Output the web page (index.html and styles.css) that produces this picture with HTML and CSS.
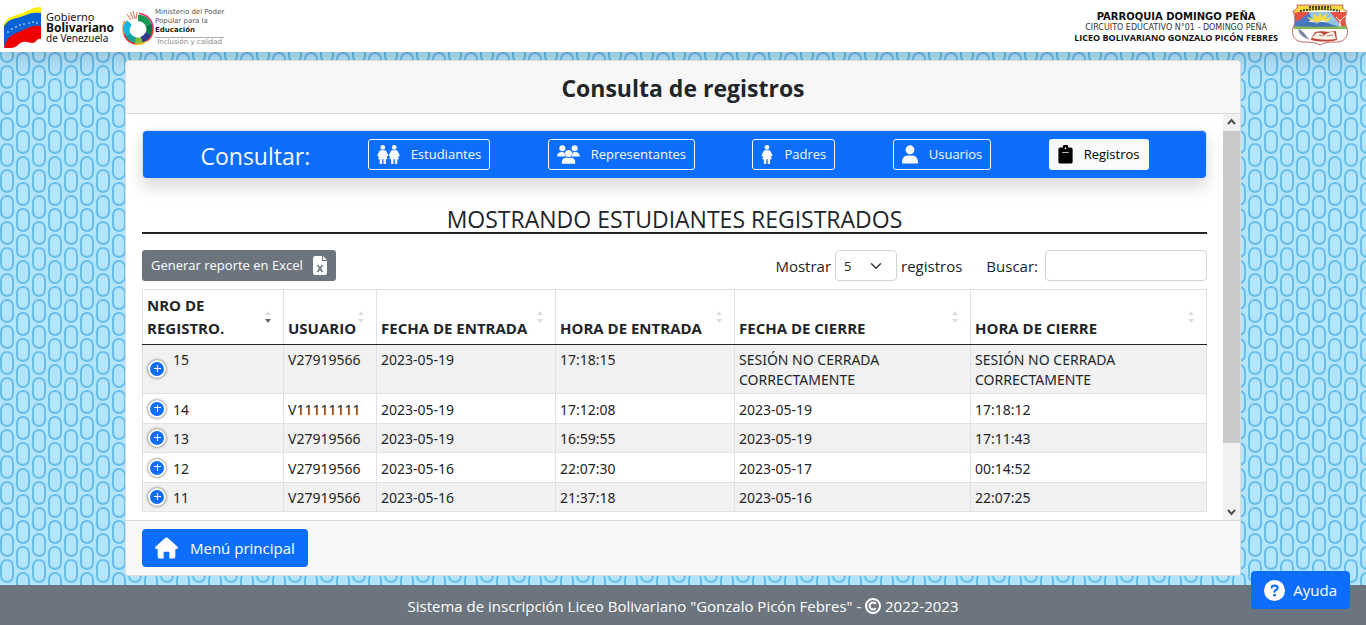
FILE: index.html
```html
<!DOCTYPE html>
<html lang="es">
<head>
<meta charset="utf-8">
<meta name="viewport" content="width=device-width, initial-scale=1">
<title>Consulta de registros</title>
<link rel="stylesheet" href="styles.css">
</head>
<body>
<svg class="defs" aria-hidden="true">
  <symbol id="kid" viewBox="0 0 12 20"><circle cx="6" cy="2.600" r="2.500"/><path d="M4.300 5.600h3.400c1 0 1.700.6 2.100 1.300l2 3.900c.4.900-.9 1.700-1.500.9l-.3-.4.9 3.700H9.300v4.300c0 1.100-2.600 1.100-2.600 0V15H5.300v4.300c0 1.100-2.600 1.100-2.600 0V15H1.100l.9-3.700-.3.400c-.6.8-1.900 0-1.500-.9l2-3.900c.4-.7 1.100-1.300 2.100-1.300z"/></symbol>
  <symbol id="sort" viewBox="0 0 6 14"><path class="up" d="M0 5 3 1l3 4z"/><path class="down" d="M0 9h6l-3 4z"/></symbol>
</svg>

<header class="topbar">
  <div class="brand">
    <svg class="flag" viewBox="0 0 38 42" aria-hidden="true">
      <path fill="#fff200" d="M0 17C4 9 11 9 18 6 26 3 29 0 37 0v15c-7 0-13 3-19 6-7 3-13 2-18 8z"/>
      <path fill="#0b62d6" d="M0 19c5-8 12-7 19-10 7-3 11-4 18-3v14c-6 1-11 4-17 7-7 3-14 3-20 13z"/>
      <path fill="#f00000" d="M0 41c2-11 9-14 17-17 7-3 12-6 20-5v13c-4-1-4 3-8 4-4 0-6-2-10-1-5 1-5 6-13 6z"/>
      <g fill="#fff"><circle cx="4" cy="25" r=".8"/><circle cx="8" cy="22" r=".8"/><circle cx="12" cy="20" r=".8"/><circle cx="16" cy="18" r=".8"/><circle cx="20" cy="17" r=".8"/><circle cx="25" cy="16" r=".8"/><circle cx="29" cy="15" r=".8"/><circle cx="33" cy="16" r=".8"/></g>
    </svg>
    <p class="gov">Gobierno<strong>Bolivariano</strong><span>de Venezuela</span></p>
    <svg class="ring" viewBox="0 0 32 34" aria-hidden="true">
      <g fill="none" stroke-width="6.500">
        <path stroke="#179a51" d="M16 7a11.500 11.500 0 0 1 10.500 6.500"/>
        <path stroke="#087a4a" d="M26.500 13.500a11.500 11.500 0 0 1 0 10"/>
        <path stroke="#303a8c" d="M26.500 23a11.500 11.500 0 0 1-7 6"/>
        <path stroke="#85bc3c" d="M20 29a11.500 11.500 0 0 1-7 .500"/>
        <path stroke="#14a398" d="M13.500 29.500a11.500 11.500 0 0 1-8-6"/>
        <path stroke="#1cb3dd" d="M5.500 24a11.500 11.500 0 0 1 2-12.500"/>
      </g>
      <g fill="none" stroke-width="1.500">
        <path stroke="#e72565" d="M17 2.500A15 15 0 0 1 31 17"/><path stroke="#ef3f28" d="M31 17a15 15 0 0 1-6 13"/>
        <path stroke="#f2b01e" d="M25 30a15 15 0 0 1-12 3"/><path stroke="#e5262a" d="M13 33A15 15 0 0 1 2 23"/><path stroke="#f18d1e" d="M2 23A15 15 0 0 1 3 10"/>
        <path stroke="#e36a50" stroke-width="1" d="m5 3 4 6M8 1l3 7M11 0l2 8M15 1l-1 7"/>
      </g>
    </svg>
    <p class="ministry">Ministerio del Poder<br>Popular para la<br><strong>Educación</strong><span>Inclusión y calidad</span></p>
  </div>
  <div class="school">
    <p><strong class="parish">PARROQUIA DOMINGO PEÑA</strong><span class="circuit">CIRCUITO EDUCATIVO N°01 - DOMINGO PEÑA</span><strong class="liceo">LICEO BOLIVARIANO GONZALO PICÓN FEBRES</strong></p>
    <svg class="crest" viewBox="0 0 56 42" aria-hidden="true">
      <defs><clipPath id="shield"><path d="M5 1h46c-1 3 1 5 4 6-2 7-3 10 0 17 2 6-1 13-9 14-8 0-13 0-18 3-5-3-10-3-18-3-8-1-11-8-9-14 3-7 2-10 0-17 3-1 5-3 4-6z"/></clipPath></defs>
      <g clip-path="url(#shield)">
        <path fill="#fff" d="M0 0h56v42H0z"/>
        <path fill="#91c4e5" d="M8 8h40v17H4z"/>
        <path fill="#4b78c7" d="M0 14 8 8h8l5 8-7 8H0z"/><path fill="#e65341" d="M2 8h16L5 18zM38 8h18v16h-5z"/>
        <path fill="#f4d842" d="M0 0h56v7q-28-3-56 2z"/>
        <path fill="#f3db43" d="m28 8 2 5 5-4-1 6 7-2-6 5H20l-5-5 7 2-1-6 5 4z"/>
        <path fill="#4474b7" d="m3 24 12-6 5-2 5 4 6-4 7 4 14 4z"/><path fill="#fff" d="m16 18 4-2 3 3-3-1zM28 18l3-2 5 3-4-1z"/>
        <path fill="#81b95a" d="M2 22c12 1 35 1 53 0v3H2z"/>
        <path fill="#7988a0" d="M6 25c6 2 7 6 12 11-8-3-11-6-12-11z"/><path fill="#bd4439" d="m19 35 4-7c8-2 11 1 21-1l1 9c-8 2-17 2-26 0z"/>
        <path fill="#faf0e6" d="m20 34 4-5c6-1 7 1 8 3 2-3 5-4 10-4l2 7c-8 1-16 1-24-1z"/><path fill="none" stroke="#a87c76" d="m27 31 4 1M35 32l6-1"/><path fill="none" stroke="#fff" d="m44 13 4 4 5-5M48 17v5"/>
        <path fill="none" stroke="#4c4728" stroke-width="2" stroke-dasharray="2 1" d="M8 7q20-4 40 0M17 3h22"/>
      </g>
      <path fill="none" stroke="#c46a62" d="M5 1h46c-1 3 1 5 4 6-2 7-3 10 0 17 2 6-1 13-9 14-8 0-13 0-18 3-5-3-10-3-18-3-8-1-11-8-9-14 3-7 2-10 0-17 3-1 5-3 4-6z"/>
    </svg>
  </div>
</header>

<main class="page">
  <section class="card">
    <div class="card-header"><h1>Consulta de registros</h1></div>
    <div class="card-main">
      <div class="card-body">
        <nav class="tabs">
          <h2>Consultar:</h2>
          <a class="btn outline" href="#estudiantes"><svg class="icon" viewBox="0 0 24 20"><use href="#kid" width="12" height="20"/><use href="#kid" x="12" width="12" height="20"/></svg>Estudiantes</a>
          <a class="btn outline" href="#representantes"><svg class="icon" viewBox="0 0 24 20"><circle cx="5.500" cy="3.500" r="3.200"/><circle cx="18.500" cy="3.500" r="3.200"/><path d="M0 12c0-3 2-4.700 5-4.700 1.200 0 2 .2 2.700.6 0 1.700.4 3 1.400 4.100zM24 12c0-3-2-4.700-5-4.700-1.200 0-2 .2-2.700.6 0 1.700-.4 3-1.400 4.100z"/><circle cx="12" cy="9" r="3.700"/><path d="M5 19.700c-.5-4 1.500-6.200 5-6.200h4c3.500 0 5.500 2.200 5 6.200z"/></svg>Representantes</a>
          <a class="btn outline" href="#padres"><svg class="icon narrow" viewBox="0 0 12 20"><use href="#kid" width="12" height="20"/></svg>Padres</a>
          <a class="btn outline" href="#usuarios"><svg class="icon mid" viewBox="0 0 17 20"><circle cx="8.500" cy="5" r="4.700"/><path d="M0 18.500c0-4.500 2.500-7.500 6-7.500h5c3.500 0 6 3 6 7.500 0 .7-.3 1-1 1H1c-.7 0-1-.3-1-1z"/></svg>Usuarios</a>
          <a class="btn current" href="#registros" aria-current="page"><svg class="icon clip" viewBox="0 0 15 20"><path fill-rule="evenodd" d="M2 2.500h2.500a3 3 0 0 1 6 0H13a2 2 0 0 1 2 2v13a2 2 0 0 1-2 2H2a2 2 0 0 1-2-2v-13a2 2 0 0 1 2-2zM6.700 2.500h1.600v1.600H6.700zM4 7.500v1h7v-1z"/></svg>Registros</a>
        </nav>

        <h3 class="heading">MOSTRANDO ESTUDIANTES REGISTRADOS</h3>

        <div class="tools">
          <button class="btn export" type="button">Generar reporte en Excel<svg class="icon sheet" viewBox="0 0 14 19"><path d="M2 0h7v5h5v12a2 2 0 0 1-2 2H2a2 2 0 0 1-2-2V2C0 1 1 0 2 0zM10 0l4 4h-4z"/><path fill="none" stroke="#6c757d" stroke-width="1.600" d="m4.500 9 5 7m0-7-5 7"/></svg></button>
          <label class="length">Mostrar <select><option>5</option><option>10</option><option>25</option></select> registros</label>
          <label class="search">Buscar: <input type="search"></label>
        </div>

        <table class="records">
          <colgroup><col class="c-id"><col class="c-user"><col class="c-in"><col class="c-in"><col class="c-out"><col class="c-out"></colgroup>
          <thead><tr>
            <th class="sorted"><span>NRO DE REGISTRO.</span><svg class="sort"><use href="#sort"/></svg></th>
            <th><span>USUARIO</span><svg class="sort"><use href="#sort"/></svg></th>
            <th><span>FECHA DE ENTRADA</span><svg class="sort"><use href="#sort"/></svg></th>
            <th><span>HORA DE ENTRADA</span><svg class="sort"><use href="#sort"/></svg></th>
            <th><span>FECHA DE CIERRE</span><svg class="sort"><use href="#sort"/></svg></th>
            <th><span>HORA DE CIERRE</span><svg class="sort"><use href="#sort"/></svg></th>
          </tr></thead>
          <tbody>
            <tr><td><button class="more" type="button" aria-label="Detalles de 15"></button>15</td><td>V27919566</td><td>2023-05-19</td><td>17:18:15</td><td>SESIÓN NO CERRADA CORRECTAMENTE</td><td>SESIÓN NO CERRADA CORRECTAMENTE</td></tr>
            <tr><td><button class="more" type="button" aria-label="Detalles de 14"></button>14</td><td>V11111111</td><td>2023-05-19</td><td>17:12:08</td><td>2023-05-19</td><td>17:18:12</td></tr>
            <tr><td><button class="more" type="button" aria-label="Detalles de 13"></button>13</td><td>V27919566</td><td>2023-05-19</td><td>16:59:55</td><td>2023-05-19</td><td>17:11:43</td></tr>
            <tr><td><button class="more" type="button" aria-label="Detalles de 12"></button>12</td><td>V27919566</td><td>2023-05-16</td><td>22:07:30</td><td>2023-05-17</td><td>00:14:52</td></tr>
            <tr><td><button class="more" type="button" aria-label="Detalles de 11"></button>11</td><td>V27919566</td><td>2023-05-16</td><td>21:37:18</td><td>2023-05-16</td><td>22:07:25</td></tr>
          </tbody>
        </table>
      </div>
      <div class="scrollbar" aria-hidden="true">
        <svg viewBox="0 0 17 17"><path d="m5 10 3.500-4L12 10"/></svg>
        <div class="track"><div class="thumb"></div></div>
        <svg viewBox="0 0 17 17"><path d="m5 7 3.500 4L12 7"/></svg>
      </div>
    </div>
    <div class="card-footer">
      <a class="btn-lg" href="#menu"><svg class="home" viewBox="0 0 24 22"><path d="M12 0c.4 0 .8.200 1.100.4l10.400 9.300c1 .9.400 2.300-.9 2.300h-1.400v8a2 2 0 0 1-2 2H15v-6c0-.6-.4-1-1-1h-4c-.6 0-1 .4-1 1v6H4.800a2 2 0 0 1-2-2v-8H1.400C.1 12-.5 10.600.5 9.700L10.900.4c.3-.2.7-.4 1.100-.4z"/></svg>Menú principal</a>
    </div>
  </section>
</main>

<footer class="bottom">
  <p>Sistema de inscripción Liceo Bolivariano "Gonzalo Picón Febres" - <svg class="copy" viewBox="0 0 16 16" role="img" aria-label="Copyright"><circle cx="8" cy="8" r="7"/><path d="M10.800 5.800a3.500 3.500 0 1 0 0 4.400"/></svg> 2022-2023</p>
</footer>
<button class="btn-lg help" type="button"><svg class="question" viewBox="0 0 20 20"><circle cx="10" cy="10" r="10"/><path fill="none" stroke="#0d6efd" stroke-width="2" stroke-linecap="round" d="M7.300 7.200C7.600 4.600 13 4.700 13 7.600c0 1.800-3 2-3 3.600"/><circle cx="10" cy="14.500" r="1.300" fill="#0d6efd"/></svg>Ayuda</button>
</body>
</html>
```
FILE: styles.css
```css
*, *::before, *::after { box-sizing: border-box; }
body {
  margin: 0;
  height: 100vh;
  display: flex;
  flex-direction: column;
  font: 15px/24px "Open Sans", "Noto Sans", sans-serif;
  color: #212529;
  background: #b3e5fc url("data:image/svg+xml,%3Csvg xmlns='http://www.w3.org/2000/svg' width='32' height='26'%3E%3Cg fill='none' stroke='%2369bdea' stroke-width='2'%3E%3Crect x='1' y='14' width='12' height='22' rx='6'/%3E%3Crect x='1' y='-12' width='12' height='22' rx='6'/%3E%3Crect x='17' y='1' width='12' height='22' rx='6'/%3E%3C/g%3E%3C/svg%3E");
}
h1, h2, h3, p { margin: 0; font-weight: 400; }
a { text-decoration: none; }
button, select, input { font: inherit; margin: 0; }
.defs { position: absolute; width: 0; height: 0; }

.topbar {
  height: 52px;
  flex: none;
  display: flex;
  justify-content: space-between;
  align-items: center;
  padding: 0 18px 0 4px;
  background: #fff;
  box-shadow: 0 8px 16px rgba(0, 0, 0, .15);
}
.brand, .school { display: flex; align-items: center; }
.brand { padding-top: 3px; }
.flag { width: 38px; height: 42px; }
.gov { margin-left: 4px; font: 11px/11px "Noto Sans", sans-serif; color: #111; width: 76px; white-space: nowrap; }
.gov strong, .gov span { display: block; }
.gov strong { font-size: 12px; }
.gov span { font-size: 10px; }
.ring { width: 32px; height: 34px; }
.ministry { margin-left: 1px; font: 7px/9px "DejaVu Sans", sans-serif; color: #555; white-space: nowrap; }
.ministry strong { color: #222; }
.ministry span { display: block; border-top: 1px solid #aaa; margin-top: 2px; text-align: center; color: #888; }
.school { gap: 14px; padding-bottom: 2px; }
.school p { padding-top: 2px; font: 8px/10px "DejaVu Sans", sans-serif; text-align: center; color: #111; }
.school p > * { display: block; }
.school .parish { font-size: 10px; line-height: 13px; }
.school .circuit { color: #333; }
.school .liceo { font-family: "Open Sans", sans-serif; font-size: 9px; }
.crest { width: 56px; height: 42px; }

.page { flex: 1; min-height: 0; padding: 8px 12px 9px; display: flex; justify-content: center; }
.card {
  width: 100%;
  max-width: 1116px;
  display: flex;
  flex-direction: column;
  background: #fff;
  border: 1px solid #dcdcdc;
  border-radius: 4px;
  overflow: hidden;
}
.card-header { background: #f7f7f7; border-bottom: 1px solid #d9d9d9; padding: 13px 16px 11px; text-align: center; }
.card-header h1 { font-size: 23px; line-height: 28px; font-weight: 700; }
.card-main { flex: 1; min-height: 0; display: flex; }
.card-body { flex: 1; min-width: 0; overflow-y: auto; scrollbar-width: none; padding: 16px 16px 84px; }
.scrollbar { width: 17px; display: flex; flex-direction: column; background: #f1f1f1; }
.scrollbar svg { width: 17px; height: 17px; fill: none; stroke: #505050; stroke-width: 2; }
.track { flex: 1; }
.thumb { height: 84%; background: #c9c9c9; }
.card-footer { background: #f7f7f7; border-top: 1px solid #d9d9d9; padding: 8px 16px; }

.tabs {
  display: flex;
  justify-content: space-evenly;
  align-items: center;
  padding: 8px 0;
  border: 1px solid #dee2e6;
  border-radius: 4px;
  background: #0d6efd;
  background-clip: padding-box;
  box-shadow: 0 8px 16px rgba(0, 0, 0, .15);
}
.tabs h2 { padding-top: 2px; font-size: 23px; line-height: 28px; color: #f8f9fa; }
.btn {
  display: inline-flex;
  align-items: center;
  gap: 11px;
  height: 31px;
  padding: 0 8px;
  border: 1px solid transparent;
  border-radius: 3px;
  font-size: 13px;
  line-height: 21px;
  white-space: nowrap;
}
.outline { color: #f8f9fa; border-color: #f8f9fa; }
.current { color: #000; background: #f8f9fa; }
.icon { width: 23px; height: 19px; fill: currentColor; }
.icon.narrow { width: 12px; }
.icon.mid { width: 16px; }
.icon.clip { width: 15px; }
.icon.sheet { width: 14px; }

.heading { margin: 27px 0 16px; font-size: 23px; line-height: 26px; text-align: center; border-bottom: 2px solid #212529; }

.tools { display: flex; align-items: center; margin-bottom: 8px; }
.export { background: #6c757d; color: #fff; gap: 10px; }
.length { margin-left: auto; }
.tools label { display: flex; align-items: center; gap: 4px; }
.tools select {
  width: 62px;
  height: 31px;
  padding: 0 8px;
  font-size: 13px;
  color: #212529;
  border: 1px solid #ced4da;
  border-radius: 4px;
  appearance: none;
  background: #fff url("data:image/svg+xml,%3Csvg xmlns='http://www.w3.org/2000/svg' width='12' height='12' viewBox='0 0 16 16'%3E%3Cpath fill='none' stroke='%23343a40' stroke-linecap='round' stroke-linejoin='round' stroke-width='2' d='m2 5 6 6 6-6'/%3E%3C/svg%3E") no-repeat right 14px center;
}
.tools .search { margin-left: 24px; gap: 7px; }
.tools input { width: 162px; height: 31px; border: 1px solid #ced4da; border-radius: 4px; background: #fff; }

.records { width: 100%; border-collapse: collapse; table-layout: fixed; }
.c-id { width: 141px; }
.c-user { width: 93px; }
.c-in { width: 179px; }
.records th, .records td { border: 1px solid #dee2e6; text-align: left; }
.records th { position: relative; padding: 4px 24px 4px 4px; vertical-align: bottom; line-height: 23px; font-weight: 700; border-bottom-color: #212529; white-space: nowrap; }
.records th.sorted { white-space: normal; }
.sort { position: absolute; right: 12px; top: 50%; margin-top: -7px; width: 6px; height: 14px; fill: #dedede; }
.sorted .sort { --down: #666; }
.down { fill: var(--down, #dedede); }
.records td { font: 14px/20px "Noto Sans", sans-serif; vertical-align: top; padding: 5px 4px 3px; }
.records tbody tr:nth-child(odd) { background: #f1f1f1; }
.records tbody tr:nth-child(even) td { padding-top: 6px; }
.records td:first-child { position: relative; padding-left: 30px; }
.more {
  position: absolute;
  left: 5px;
  top: 50%;
  width: 18px;
  height: 18px;
  margin-top: -9px;
  padding: 0;
  border: 2px solid #fff;
  border-radius: 50%;
  background: linear-gradient(#fff, #fff) 50% 45% / 7px 1px no-repeat, linear-gradient(#fff, #fff) 50% 43% / 1px 7px no-repeat, #0d6efd;
  box-shadow: 0 0 3px #444;
}

.btn-lg {
  display: inline-flex;
  align-items: center;
  gap: 12px;
  height: 38px;
  padding: 0 13px;
  border: 0;
  border-radius: 4px;
  background: #0d6efd;
  color: #fff;
}
.btn-lg svg { fill: #fff; }
.home { width: 23px; height: 22px; }
.question { width: 21px; height: 21px; }
.help { position: fixed; right: 16px; bottom: 16px; gap: 8px; }
.bottom { flex: none; height: 40px; padding-top: 9px; background: #6c757d; color: #fff; text-align: center; }
.copy { width: 16px; height: 16px; vertical-align: -2px; fill: none; stroke: #fff; stroke-width: 2; }
```
